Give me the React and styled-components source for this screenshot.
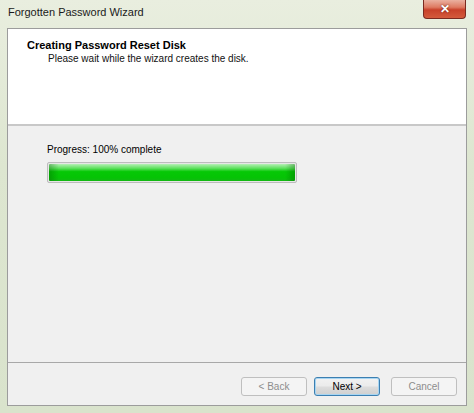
import styled, { createGlobalStyle } from 'styled-components';

const GlobalStyle = createGlobalStyle`
  html, body {
    margin: 0;
    padding: 0;
    background: #dfe7d6;
  }
  * {
    box-sizing: border-box;
  }
`;

const Frame = styled.div`
  width: 474px;
  height: 413px;
  display: flex;
  flex-direction: column;
  padding: 0 7px 7px 7px;
  background: linear-gradient(180deg, #e9eedf 0%, #dde6d0 40%, #d9e3cc 100%);
  font-family: 'Liberation Sans', Arial, sans-serif;
  color: #000;
  position: relative;
`;

const TitleBar = styled.div`
  height: 28px;
  display: flex;
  align-items: center;
  padding: 0 0 4px 1px;
`;

const Title = styled.span`
  font-size: 11px;
  color: #1a1a1a;
`;

const CloseButton = styled.div`
  position: absolute;
  top: 0;
  right: 8px;
  width: 43px;
  height: 19px;
  border-radius: 0 0 4px 4px;
  border: 1px solid #7a2a20;
  border-top: none;
  background: linear-gradient(180deg, #eab0a0 0%, #de7a62 40%, #c8412a 55%, #d45a3c 100%);
  display: flex;
  align-items: center;
  justify-content: center;
  color: #fff;
  font-size: 12px;
  font-weight: bold;
  text-shadow: 0 0 2px #5a1408;
`;

const Client = styled.div`
  flex: 1;
  display: flex;
  flex-direction: column;
  border: 1px solid #9c9c9c;
  background: #f0f0f0;
`;

const Header = styled.div`
  height: 97px;
  background: #fff;
  border-bottom: 2px solid #c8c8c8;
  padding: 9px 0 0 19px;
`;

const HeaderTitle = styled.div`
  font-size: 11px;
  font-weight: bold;
  line-height: 14px;
`;

const HeaderSub = styled.div`
  font-size: 10px;
  line-height: 14px;
  padding-left: 21px;
  color: #111;
`;

const Body = styled.div`
  flex: 1;
  padding: 17px 0 0 39px;
`;

const Label = styled.div`
  font-size: 10px;
  line-height: 14px;
  margin-bottom: 5px;
`;

const Track = styled.div`
  width: 250px;
  height: 21px;
  border: 1px solid #bcbcbc;
  border-radius: 2px;
  background: #e6e6e6;
  padding: 1px;
`;

const Fill = styled.div`
  height: 100%;
  border-radius: 1px;
  background:
    linear-gradient(90deg, rgba(0, 90, 0, 0.35) 0%, rgba(0, 0, 0, 0) 4%, rgba(0, 0, 0, 0) 96%, rgba(0, 90, 0, 0.35) 100%),
    linear-gradient(180deg, #b6f0b6 0%, #5fe05f 25%, #06c806 45%, #05c405 80%, #14b814 100%);
`;

const Footer = styled.div`
  height: 43px;
  border-top: 1px solid #a8a8a8;
  display: flex;
  align-items: flex-start;
  justify-content: flex-end;
  padding: 14px 9px 0 0;
  gap: 7px;
`;

const Button = styled.div`
  width: 66px;
  height: 19px;
  display: flex;
  align-items: center;
  justify-content: center;
  font-size: 10px;
  border-radius: 3px;
  border: 1px solid ${({ $default }) => ($default ? '#3c7fb1' : '#bfbfbf')};
  color: ${({ $disabled }) => ($disabled ? '#8d8d8d' : '#000')};
  background: ${({ $disabled }) =>
    $disabled
      ? '#f4f4f4'
      : 'linear-gradient(180deg, #f2f2f2 0%, #ebebeb 48%, #dddddd 52%, #cfcfcf 100%)'};
  box-shadow: ${({ $default }) => ($default ? 'inset 0 0 0 1px #a7d5f2' : 'none')};
  margin-right: ${({ $gap }) => ($gap ? '4px' : '0')};
`;

export default function App() {
  return (
    <>
      <GlobalStyle />
      <Frame>
        <TitleBar>
          <Title>Forgotten Password Wizard</Title>
        </TitleBar>
        <CloseButton>✕</CloseButton>
        <Client>
          <Header>
            <HeaderTitle>Creating Password Reset Disk</HeaderTitle>
            <HeaderSub>Please wait while the wizard creates the disk.</HeaderSub>
          </Header>
          <Body>
            <Label>Progress: 100% complete</Label>
            <Track>
              <Fill style={{ width: '100%' }} />
            </Track>
          </Body>
          <Footer>
            <Button $disabled>&lt; Back</Button>
            <Button $default $gap>Next &gt;</Button>
            <Button $disabled>Cancel</Button>
          </Footer>
        </Client>
      </Frame>
    </>
  );
}
